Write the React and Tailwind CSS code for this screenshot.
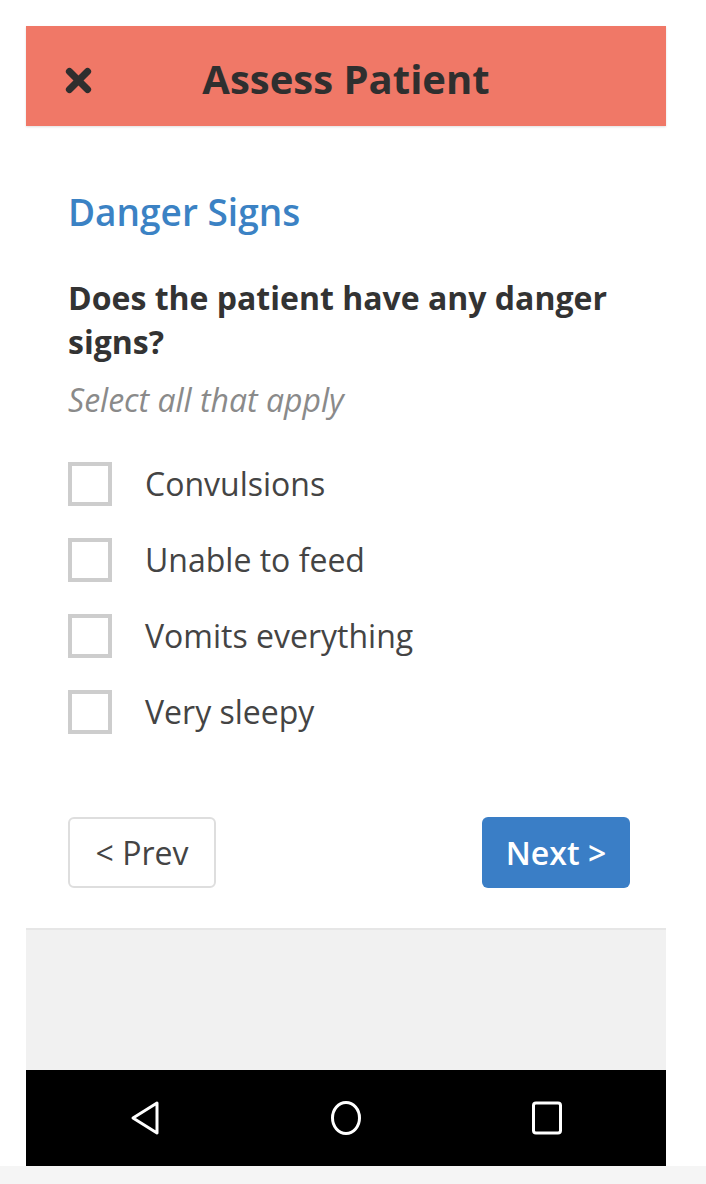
import { useState } from 'react';

const options = ['Convulsions', 'Unable to feed', 'Vomits everything', 'Very sleepy'];

function App() {
  const [checked, setChecked] = useState({});

  const toggle = (name) => setChecked({ ...checked, [name]: !checked[name] });

  return (
    <div className="min-h-[1184px] bg-white font-['Open_Sans',sans-serif] flex flex-col">
      <div className="pt-[26px] pl-[26px]">
        <div className="w-[640px] h-[1140px] flex flex-col">

          {/* Header */}
          <header className="h-[100px] bg-[#f07867] flex items-center relative shadow-[0_1px_2px_rgba(0,0,0,0.12)]">
            <button className="absolute left-[36px] top-[38px] w-[32px] h-[32px] flex items-center justify-center">
              <svg viewBox="0 0 24 24" className="w-[31px] h-[31px]" fill="none" stroke="#2e2e2e" strokeWidth="5.5" strokeLinecap="round">
                <path d="M5 5l14 14M19 5L5 19" />
              </svg>
            </button>
            <h1 className="w-full text-center text-[40px] font-bold text-[#2f2f2f] leading-[50px] pt-[6px]">Assess Patient</h1>
          </header>

          {/* Form */}
          <main className="bg-white pl-[42px] pr-[30px] pt-[62px] h-[802px]">
            <h2 className="text-[37px] font-semibold text-[#3b82c4] leading-[48px]">Danger Signs</h2>
            <p className="mt-[40px] text-[32px] font-bold text-[#333] leading-[44px]">
              Does the patient have any danger signs?
            </p>
            <p className="mt-[18px] text-[32px] italic text-[#8a8a8a] leading-[36px]">Select all that apply</p>

            <div className="mt-[44px] flex flex-col gap-[32px]">
              {options.map((opt) => (
                <label key={opt} className="flex items-center gap-[33px] cursor-pointer" onClick={() => toggle(opt)}>
                  <span className="w-[44px] h-[44px] border-[4px] border-[#cdcdcd] bg-white flex items-center justify-center text-[#3b82c4] text-[26px]">
                    {checked[opt] ? '✓' : ''}
                  </span>
                  <span className="text-[32px] text-[#444] leading-[44px]">{opt}</span>
                </label>
              ))}
            </div>

            <div className="mt-[83px] flex justify-between pr-[6px]">
              <button className="w-[148px] h-[71px] rounded-[6px] border-2 border-[#dedede] bg-white text-[32px] text-[#444]">
                &lt; Prev
              </button>
              <button className="w-[148px] h-[71px] rounded-[6px] bg-[#3a7ec6] text-[32px] font-semibold text-white">
                Next &gt;
              </button>
            </div>
          </main>

          {/* Empty area */}
          <div className="flex-1 bg-[#f1f1f1] border-t-2 border-[#e6e6e6]" />

          {/* Android nav bar */}
          <nav className="h-[96px] bg-black flex items-center justify-center gap-[169px]">
            <svg viewBox="0 0 32 36" className="w-[32px] h-[36px]" fill="none" stroke="white" strokeWidth="3" strokeLinejoin="round">
              <path d="M28 3L4 18l24 15z" />
            </svg>
            <svg viewBox="0 0 32 36" className="w-[32px] h-[36px]" fill="none" stroke="white" strokeWidth="3">
              <ellipse cx="16" cy="18" rx="13.5" ry="15.5" />
            </svg>
            <svg viewBox="0 0 32 36" className="w-[32px] h-[36px]" fill="none" stroke="white" strokeWidth="3">
              <rect x="2.5" y="3" width="27" height="30" rx="2.5" />
            </svg>
          </nav>
        </div>
      </div>
      <div className="flex-1 bg-[#f5f5f5]" />
    </div>
  );
}

export default App;
